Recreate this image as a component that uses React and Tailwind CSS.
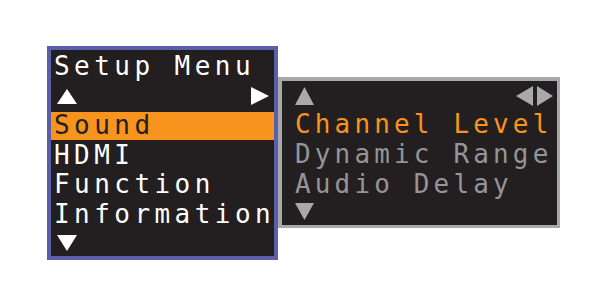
import React from 'react';

const mono = { fontFamily: '"DejaVu Sans Mono", "Liberation Mono", monospace' };

// small solid triangles drawn as svg
const Tri = ({ dir, w, h, color }) => {
  const pts = {
    up: `0,${h} ${w / 2},0 ${w},${h}`,
    down: `0,0 ${w},0 ${w / 2},${h}`,
    right: `0,0 ${w},${h / 2} 0,${h}`,
    left: `${w},0 0,${h / 2} ${w},${h}`,
  }[dir];
  return (
    <svg width={w} height={h} viewBox={`0 0 ${w} ${h}`} className="block shrink-0">
      <polygon points={pts} fill={color} />
    </svg>
  );
};

const Row = ({ children, className = '' }) => (
  <div className={`h-[29.5px] flex items-center whitespace-nowrap ${className}`}>{children}</div>
);

export default function App() {
  return (
    <div className="w-[600px] h-[304px] bg-white overflow-hidden" style={mono}>
      <div className="flex items-start pl-[47px] pt-[46px]">
        {/* main setup menu */}
        <div className="w-[231px] h-[214px] border-4 border-[#5b5fa8] bg-[#231f20] pt-[2px] flex flex-col overflow-hidden relative z-10 shrink-0">
          <Row className="pl-[3px] text-white text-[26px] tracking-[4.45px]">Setup Menu</Row>
          <Row className="pl-[6px] pr-[5px] justify-between">
            <Tri dir="up" w={20} h={15} color="#ffffff" />
            <Tri dir="right" w={18} h={18} color="#ffffff" />
          </Row>
          <div className="h-[28px] mt-[0.5px] mb-[1px] flex items-center pl-[3px] bg-[#f7941d] text-[#231f20] text-[26px] tracking-[4.45px]">
            Sound
          </div>
          <Row className="pl-[3px] text-white text-[26px] tracking-[4.45px]">HDMI</Row>
          <Row className="pl-[3px] text-white text-[26px] tracking-[4.45px]">Function</Row>
          <Row className="pl-[3px] text-white text-[26px] tracking-[4.45px]">Information</Row>
          <div className="flex-1 flex items-start pt-[6px] pl-[6px]">
            <Tri dir="down" w={20} h={16} color="#ffffff" />
          </div>
        </div>

        {/* sound submenu */}
        <div className="w-[282px] h-[151px] mt-[31px] border-4 border-r-[3px] border-b-[3px] border-[#a7a9ac] bg-[#231f20] flex flex-col overflow-hidden shrink-0">
          <div className="h-[29px] flex items-center justify-between pl-[13px] pr-[4px]">
            <Tri dir="up" w={19} h={18} color="#a7a9ac" />
            <div className="flex gap-[4px]">
              <Tri dir="left" w={17} h={20} color="#a7a9ac" />
              <Tri dir="right" w={16} h={20} color="#a7a9ac" />
            </div>
          </div>
          <div className="h-[29px] flex items-center pl-[13px] whitespace-nowrap text-[#f7941d] text-[26px] tracking-[4.15px]">
            Channel Level
          </div>
          <div className="h-[30px] flex items-center pl-[13px] whitespace-nowrap text-[#939598] text-[26px] tracking-[4.15px]">
            Dynamic Range
          </div>
          <div className="h-[30px] flex items-center pl-[13px] whitespace-nowrap text-[#939598] text-[26px] tracking-[4.15px]">
            Audio Delay
          </div>
          <div className="flex-1 flex items-start pt-[4px] pl-[13px]">
            <Tri dir="down" w={19} h={17} color="#a7a9ac" />
          </div>
        </div>
      </div>
    </div>
  );
}
